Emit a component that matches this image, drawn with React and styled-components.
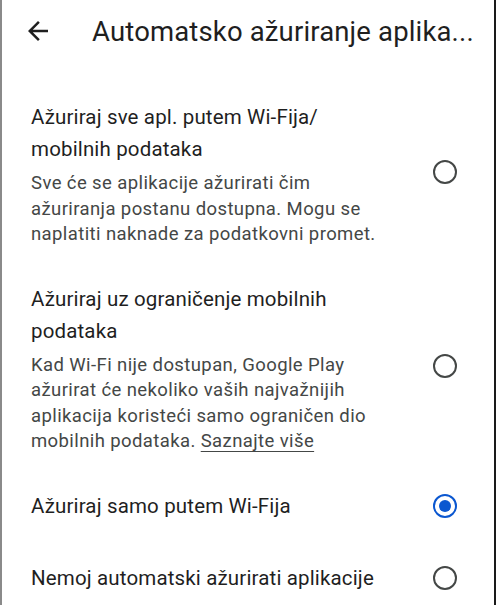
import React from "react";
import styled, { createGlobalStyle } from "styled-components";

const Global = createGlobalStyle`
  html, body { margin: 0; padding: 0; background: #fff; }
  body { font-family: Roboto, "Noto Sans", sans-serif; color: #1f1f1f; }
  * { box-sizing: border-box; }
`;

const Frame = styled.div`
  width: 496px;
  height: 605px;
  overflow: hidden;
  background: #fff;
  border-left: 2px solid #8a8a8a;
  border-right: 2px solid #1a1a1a;
  display: flex;
  flex-direction: column;
`;

const Header = styled.header`
  height: 62px;
  flex: none;
  display: flex;
  align-items: center;
  padding-left: 20px;
  gap: 38px;
`;

const BackButton = styled.button`
  width: 32px;
  height: 32px;
  border: 0;
  padding: 0;
  background: none;
  display: flex;
  align-items: center;
  justify-content: center;
  color: #1f1f1f;
`;

const Title = styled.h1`
  margin: 0;
  font-size: 27.5px;
  font-weight: 400;
  color: #1f1f1f;
  white-space: nowrap;
  letter-spacing: 0.15px;
`;

const List = styled.div`
  padding-top: 19px;
  display: flex;
  flex-direction: column;
`;

const Row = styled.label`
  display: flex;
  align-items: center;
  padding: 20px 37px 20px 29px;
  gap: 20px;
`;

const TextCol = styled.div`
  flex: 1;
  min-width: 0;
`;

const Line = styled.span`
  display: block;
  white-space: nowrap;
`;

const OptionTitle = styled.div`
  font-size: 20.5px;
  letter-spacing: 0.15px;
  line-height: 32px;
  color: #1f1f1f;
`;

const Desc = styled.div`
  margin-top: 6px;
  margin-bottom: -5px;
  font-size: 18.5px;
  letter-spacing: 0.4px;
  line-height: 25.5px;
  color: #444746;
`;

const Link = styled.span`
  text-decoration: underline;
  text-underline-offset: 4px;
  text-decoration-thickness: 1px;
`;

const Radio = styled.span`
  width: 24px;
  height: 24px;
  flex: none;
  border-radius: 50%;
  border: 2.5px solid ${(p) => (p.$checked ? "#0b57d0" : "#444746")};
  display: flex;
  align-items: center;
  justify-content: center;
  &::after {
    content: "";
    width: 12px;
    height: 12px;
    border-radius: 50%;
    background: #0b57d0;
    display: ${(p) => (p.$checked ? "block" : "none")};
  }
`;

const options = [
  {
    title: ["Ažuriraj sve apl. putem Wi-Fija/", "mobilnih podataka"],
    desc: [
      "Sve će se aplikacije ažurirati čim",
      "ažuriranja postanu dostupna. Mogu se",
      "naplatiti naknade za podatkovni promet.",
    ],
  },
  {
    title: ["Ažuriraj uz ograničenje mobilnih", "podataka"],
    desc: [
      "Kad Wi-Fi nije dostupan, Google Play",
      "ažurirat će nekoliko vaših najvažnijih",
      "aplikacija koristeći samo ograničen dio",
      "mobilnih podataka. ",
    ],
    link: "Saznajte više",
  },
  { title: ["Ažuriraj samo putem Wi-Fija"], checked: true },
  { title: ["Nemoj automatski ažurirati aplikacije"] },
];

export default function App() {
  return (
    <>
      <Global />
      <Frame>
        <Header>
          <BackButton aria-label="Natrag">
            <svg width="30" height="30" viewBox="0 0 24 24">
              <path
                d="M20 11H7.83l5.59-5.59L12 4l-8 8 8 8 1.41-1.41L7.83 13H20v-2z"
                fill="#1f1f1f"
              />
            </svg>
          </BackButton>
          <Title>Automatsko ažuriranje aplika...</Title>
        </Header>
        <List>
          {options.map((o, i) => (
            <Row key={i}>
              <TextCol>
                <OptionTitle>
                  {o.title.map((t, j) => (
                    <Line key={j}>{t}</Line>
                  ))}
                </OptionTitle>
                {o.desc && (
                  <Desc>
                    {o.desc.map((t, j) => (
                      <Line key={j}>
                        {t}
                        {o.link && j === o.desc.length - 1 && <Link>{o.link}</Link>}
                      </Line>
                    ))}
                  </Desc>
                )}
              </TextCol>
              <Radio $checked={o.checked} />
            </Row>
          ))}
        </List>
      </Frame>
    </>
  );
}
